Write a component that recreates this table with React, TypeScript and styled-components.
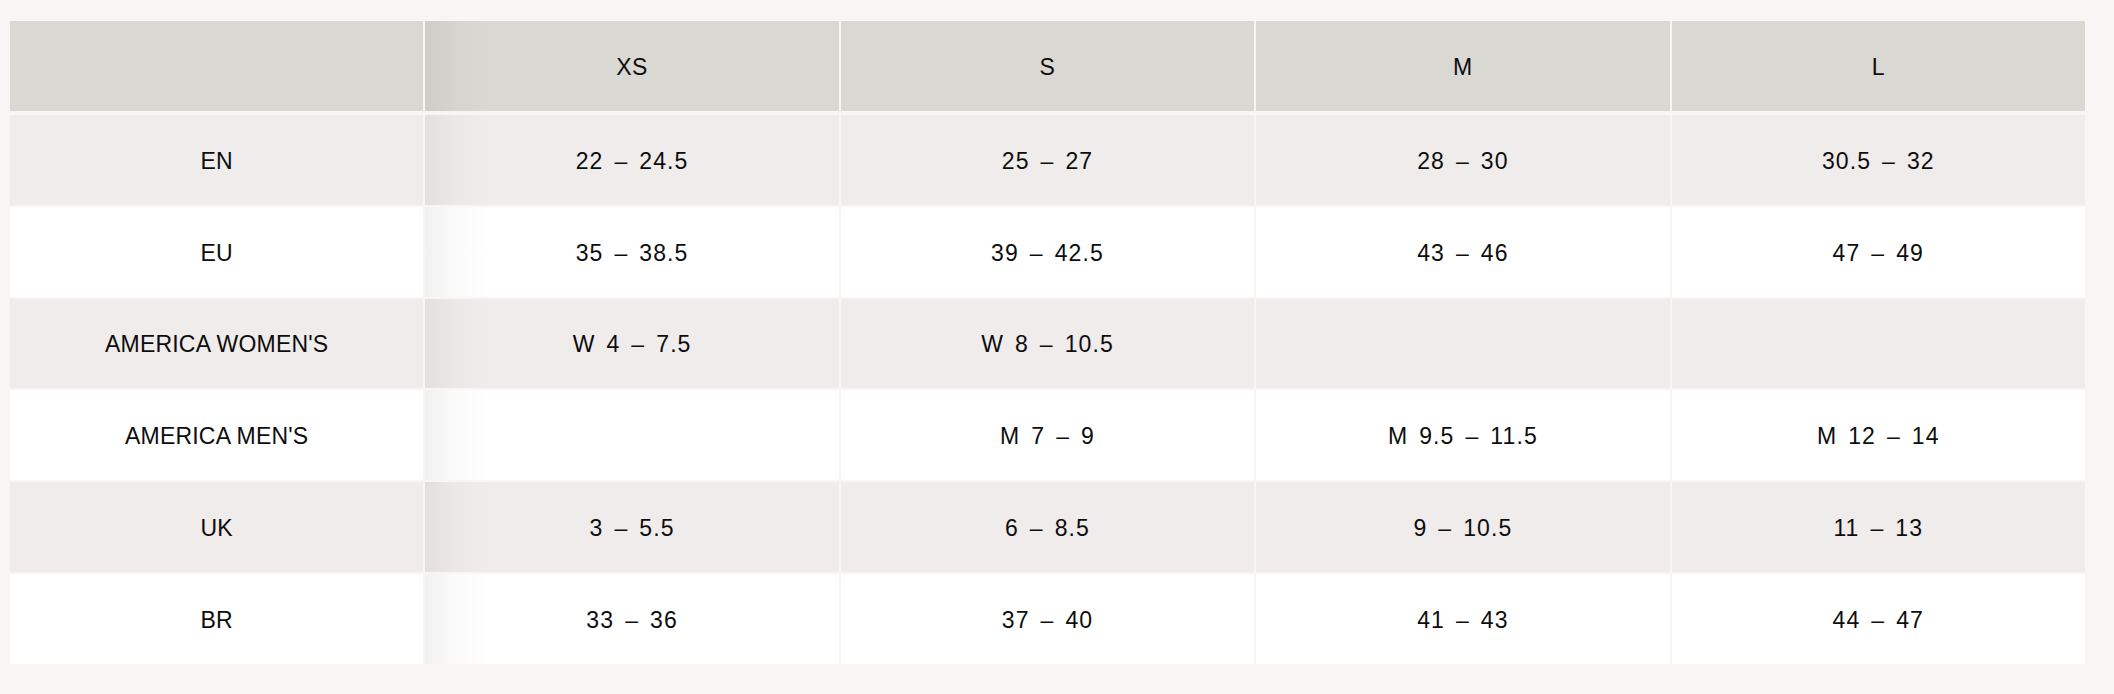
import styled, { createGlobalStyle } from "styled-components";

const GlobalStyle = createGlobalStyle`
  html, body {
    margin: 0;
    padding: 0;
    background: #f7f6f4;
  }
  body {
    font-family: "Liberation Sans", Arial, sans-serif;
    color: #0d0d0d;
  }
`;

const sizes = ["XS", "S", "M", "L"];

const rows: { label: string; values: string[] }[] = [
  { label: "EN", values: ["22 – 24.5", "25 – 27", "28 – 30", "30.5 – 32"] },
  { label: "EU", values: ["35 – 38.5", "39 – 42.5", "43 – 46", "47 – 49"] },
  { label: "AMERICA WOMEN'S", values: ["W 4 – 7.5", "W 8 – 10.5", "", ""] },
  { label: "AMERICA MEN'S", values: ["", "M 7 – 9", "M 9.5 – 11.5", "M 12 – 14"] },
  { label: "UK", values: ["3 – 5.5", "6 – 8.5", "9 – 10.5", "11 – 13"] },
  { label: "BR", values: ["33 – 36", "37 – 40", "41 – 43", "44 – 47"] },
];

export default function App() {
  return (
    <>
      <GlobalStyle />
      <Page>
        <SizeTable>
          <HeaderRow>
            <LabelCell $tone="head" />
            {sizes.map((s) => (
              <Cell key={s} $tone="head">
                <HeadText>{s}</HeadText>
              </Cell>
            ))}
          </HeaderRow>
          {rows.map((row, i) => {
            const tone = i % 2 === 0 ? "shade" : "plain";
            return (
              <Row key={row.label}>
                <LabelCell $tone={tone}>
                  <LabelText>{row.label}</LabelText>
                </LabelCell>
                {row.values.map((v, j) => (
                  <Cell key={j} $tone={tone}>
                    <ValueText>{v}</ValueText>
                  </Cell>
                ))}
              </Row>
            );
          })}
        </SizeTable>
      </Page>
    </>
  );
}

type Tone = "head" | "shade" | "plain";

const toneColors: Record<Tone, string> = {
  head: "#d9d8d3",
  shade: "#efeceb",
  plain: "#ffffff",
};

const Page = styled.div`
  height: 694px;
  box-sizing: border-box;
  padding: 21px 29px 0 10px;
`;

const SizeTable = styled.div`
  width: 2075px;
  display: flex;
  flex-direction: column;
  gap: 2px;
`;

const Row = styled.div`
  display: grid;
  grid-template-columns: repeat(5, 1fr);
  column-gap: 2px;
  height: 89.8px;
`;

const HeaderRow = styled(Row)`
  height: 90px;
  margin-bottom: 2px;
`;

const Cell = styled.div<{ $tone: Tone }>`
  background: ${(p) => toneColors[p.$tone]};
  display: flex;
  align-items: center;
  justify-content: center;
  padding-top: 3px;
  box-sizing: border-box;
`;

const LabelCell = styled(Cell)`
  position: relative;

  &::after {
    content: "";
    position: absolute;
    top: 0;
    bottom: 0;
    left: calc(100% + 2px);
    width: 64px;
    pointer-events: none;
    background: linear-gradient(
      to right,
      rgba(60, 50, 40, 0.07),
      rgba(60, 50, 40, 0.025) 45%,
      rgba(60, 50, 40, 0)
    );
    z-index: 1;
  }
`;

const HeadText = styled.span`
  font-size: 23px;
  letter-spacing: 0.4px;
`;

const LabelText = styled.span`
  font-size: 23px;
  letter-spacing: 0.2px;
`;

const ValueText = styled.span`
  font-size: 23px;
  letter-spacing: 1.1px;
  word-spacing: 3.5px;
`;
